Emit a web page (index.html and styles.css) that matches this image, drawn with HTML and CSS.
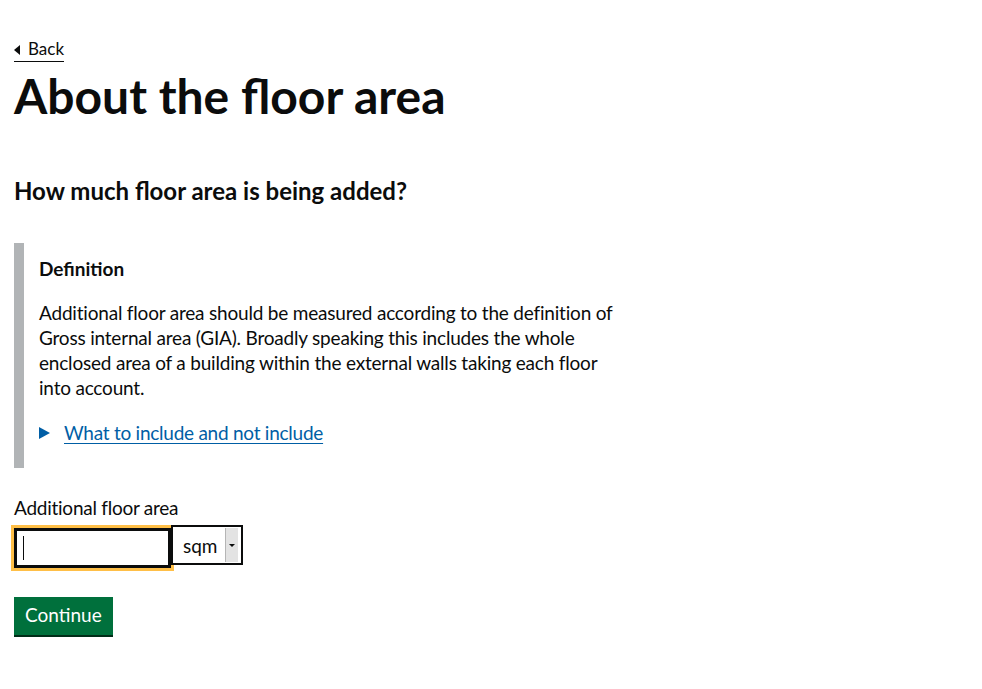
FILE: index.html
```html
<!DOCTYPE html>
<html lang="en">
<head>
<meta charset="utf-8">
<title>About the floor area</title>
<link rel="stylesheet" href="styles.css">
</head>
<body>
<main class="page">
  <a class="back-link" href="#">Back</a>
  <h1 class="heading-xl">About the floor area</h1>
  <h2 class="heading-m">How much floor area is being added?</h2>
  <div class="inset">
    <h3 class="heading-s">Definition</h3>
    <p class="body">Additional floor area should be measured according to the definition of Gross internal area (GIA). Broadly speaking this includes the whole enclosed area of a building within the external walls taking each floor into account.</p>
    <div class="details">
      <span class="details-arrow"></span>
      <a class="details-link" href="#">What to include and not include</a>
    </div>
  </div>
  <label class="label" for="area">Additional floor area</label>
  <div class="field-row">
    <div class="text-input" id="area"><span class="caret"></span></div>
    <div class="select">
      <span class="select-value">sqm</span>
      <span class="select-btn"><span class="select-tri"></span></span>
    </div>
  </div>
  <button class="button" type="button">Continue</button>
</main>
</body>
</html>
```

FILE: styles.css
```css
* { box-sizing: border-box; }
html, body { margin: 0; padding: 0; background: #fff; }
body {
  font-family: Lato, "Liberation Sans", sans-serif;
  color: #0b0c0c;
}
.page {
  padding: 38px 14px 40px;
  display: flex;
  flex-direction: column;
  align-items: flex-start;
}
.back-link {
  position: relative;
  font-size: 17px;
  line-height: 20px;
  color: #0b0c0c;
  text-decoration: none;
  border-bottom: 1px solid #0b0c0c;
  padding-left: 14px;
  padding-bottom: 2px;
  margin-top: 1px;
}
.back-link::before {
  content: "";
  position: absolute;
  left: 0;
  top: 6px;
  border-style: solid;
  border-width: 5px 6px 5px 0;
  border-color: transparent #0b0c0c transparent transparent;
}
.heading-xl {
  font-size: 48px;
  line-height: 50px;
  font-weight: 700;
  margin: 9px 0 0;
}
.heading-m {
  font-size: 24px;
  line-height: 30px;
  font-weight: 700;
  margin: 55px 0 0;
}
.inset {
  margin-top: 37px;
  border-left: 10px solid #b1b4b6;
  padding: 13px 0 23px 15px;
  width: 620px;
}
.heading-s {
  font-size: 19px;
  line-height: 25px;
  font-weight: 700;
  margin: 0 0 19px;
}
.body {
  font-size: 19px;
  line-height: 25px;
  letter-spacing: -0.2px;
  margin: 0 0 20px;
  width: 590px;
}
.details {
  display: flex;
  align-items: center;
  font-size: 19px;
  line-height: 25px;
}
.details-arrow {
  width: 0; height: 0;
  border-style: solid;
  border-width: 6px 0 6px 11px;
  border-color: transparent transparent transparent #005ea5;
  margin-right: 14px;
}
.details-link {
  color: #005ea5;
  letter-spacing: -0.25px;
  text-decoration: underline;
  text-underline-offset: 3px;
  text-decoration-thickness: 1px;
}
.label {
  display: block;
  font-size: 19px;
  line-height: 25px;
  letter-spacing: -0.25px;
  margin-top: 27px;
  margin-bottom: 5px;
}
.field-row {
  display: flex;
  align-items: flex-start;
}
.text-input {
  margin-top: 3px;
  width: 157px;
  height: 40px;
  border: 2px solid #0b0c0c;
  box-shadow: inset 0 0 0 1px #0b0c0c;
  outline: 3px solid #ffbf47;
  background: #fff;
  display: flex;
  align-items: center;
  padding-left: 7px;
}
.caret {
  width: 1px;
  height: 24px;
  background: #0b0c0c;
}
.select {
  width: 72px;
  height: 40px;
  border: 2px solid #0b0c0c;
  background: #fff;
  display: flex;
  align-items: stretch;
  padding: 1px 3px 1px 0;
}
.select-value {
  flex: 1;
  font-size: 19px;
  line-height: 36px;
  padding-left: 10px;
}
.select-btn {
  width: 13px;
  background: #e3e3e3;
  border-left: 1px solid #b5b5b5;
  display: flex;
  align-items: center;
  justify-content: center;
}
.select-tri {
  width: 0; height: 0;
  border-style: solid;
  border-width: 3px 3px 0 3px;
  border-color: #0b0c0c transparent transparent transparent;
}
.button {
  margin-top: 29px;
  font-family: inherit;
  font-size: 19px;
  line-height: 25px;
  color: #fff;
  background: #00703c;
  border: 0;
  padding: 5px 11px 8px;
  box-shadow: 0 2px 0 #002d18;
  cursor: pointer;
}
```
